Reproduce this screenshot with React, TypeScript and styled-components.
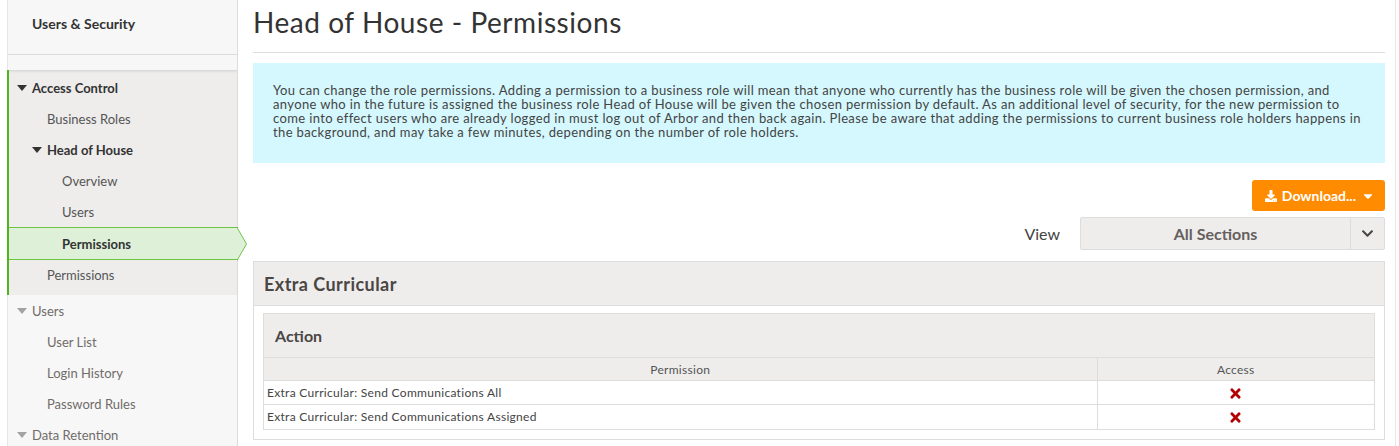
import React from 'react'
import styled, { createGlobalStyle } from 'styled-components'
import { FaDownload, FaCaretDown, FaChevronDown, FaTimes } from 'react-icons/fa'

const GlobalStyle = createGlobalStyle`
  html, body {
    margin: 0;
    padding: 0;
    background: #fff;
    font-family: Lato, "Open Sans", sans-serif;
    color: #444;
  }
  * { box-sizing: border-box; }
`

interface NavItem {
  label: string
  level: number
  bold?: boolean
  caret?: boolean
  selected?: boolean
}

const accessItems: NavItem[] = [
  { label: 'Access Control', level: 0, bold: true, caret: true },
  { label: 'Business Roles', level: 1 },
  { label: 'Head of House', level: 1, bold: true, caret: true },
  { label: 'Overview', level: 2 },
  { label: 'Users', level: 2 },
  { label: 'Permissions', level: 2, bold: true, selected: true },
  { label: 'Permissions', level: 1 },
]

const otherItems: NavItem[] = [
  { label: 'Users', level: 0, caret: true },
  { label: 'User List', level: 1 },
  { label: 'Login History', level: 1 },
  { label: 'Password Rules', level: 1 },
  { label: 'Data Retention', level: 0, caret: true },
]

const rows = ['Extra Curricular: Send Communications All', 'Extra Curricular: Send Communications Assigned']

function Caret({ muted }: { muted?: boolean }) {
  return (
    <CaretIcon width="10" height="6" viewBox="0 0 10 6">
      <path d="M0 0 H10 L5 6 Z" fill={muted ? '#a5a3a1' : '#333'} />
    </CaretIcon>
  )
}

function Nav({ items, muted }: { items: NavItem[]; muted?: boolean }) {
  return (
    <>
      {items.map((item, i) => (
        <NavRow
          key={i}
          indent={(muted ? 24 : 23) + item.level * 15 - (item.caret ? 15 : 0)}
          bold={item.bold}
          selected={item.selected}
          muted={muted}
        >
          {item.caret && <Caret muted={muted} />}
          {item.label}
          {item.selected && (
            <Arrow width="11" height="34" viewBox="0 0 11 34">
              <polygon points="0,0.5 9.5,17 0,33.5" fill="#dff0d8" />
              <polyline points="0,0.5 9.5,17 0,33.5" fill="none" stroke="#6cc644" strokeWidth="1" />
            </Arrow>
          )}
        </NavRow>
      ))}
    </>
  )
}

export default function App() {
  return (
    <>
      <GlobalStyle />
      <Page>
        <Sidebar>
          <SideHeader>Users &amp; Security</SideHeader>
          <SideSpacer />
          <ActiveGroup>
            <Nav items={accessItems} />
          </ActiveGroup>
          <Nav items={otherItems} muted />
        </Sidebar>
        <Main>
          <Title>Head of House - Permissions</Title>
          <Info>
            You can change the role permissions. Adding a permission to a business role will mean that anyone who
            currently has the business role will be given the chosen permission, and anyone who in the future is
            assigned the business role Head of House will be given the chosen permission by default. As an additional
            level of security, for the new permission to come into effect users who are already logged in must log out
            of Arbor and then back again. Please be aware that adding the permissions to current business role holders
            happens in the background, and may take a few minutes, depending on the number of role holders.
          </Info>
          <Actions>
            <DownloadButton>
              <FaDownload size={12} />
              Download...
              <FaCaretDown size={14} />
            </DownloadButton>
          </Actions>
          <ViewRow>
            <ViewLabel>View</ViewLabel>
            <Select>
              <SelectValue>All Sections</SelectValue>
              <SelectToggle>
                <FaChevronDown size={13} />
              </SelectToggle>
            </Select>
          </ViewRow>
          <Section>
            <SectionHeader>Extra Curricular</SectionHeader>
            <SectionBody>
              <SubPanel>
                <SubHeader>Action</SubHeader>
                <Table>
                  <colgroup>
                    <col style={{ width: 833 }} />
                    <col />
                  </colgroup>
                  <thead>
                    <tr>
                      <Th>Permission</Th>
                      <Th>Access</Th>
                    </tr>
                  </thead>
                  <tbody>
                    {rows.map(r => (
                      <tr key={r}>
                        <Td>{r}</Td>
                        <Td center>
                          <Denied>
                            <FaTimes size={15} />
                          </Denied>
                        </Td>
                      </tr>
                    ))}
                  </tbody>
                </Table>
              </SubPanel>
            </SectionBody>
          </Section>
        </Main>
      </Page>
    </>
  )
}

const Page = styled.div`
  display: flex;
  align-items: flex-start;
  height: 446px;
  overflow: hidden;
  padding-right: 3px;
`

const Sidebar = styled.nav`
  width: 231px;
  flex: none;
  margin-left: 7px;
  height: 446px;
  background: #f7f7f7;
  border-left: 1px solid #e6e6e6;
  border-right: 1px solid #dcdcdc;
  position: relative;
`

const SideHeader = styled.div`
  height: 55px;
  padding: 15px 0 0 24px;
  font-size: 14px;
  font-weight: 700;
  color: #333;
  border-bottom: 1px solid #dcdcdc;
`

const SideSpacer = styled.div`
  height: 15px;
`

const ActiveGroup = styled.div`
  background: #eeedec;
  border-left: 2px solid #4cb71c;
  margin-left: -1px;
  padding: 2px 0 5px;
  box-shadow: inset 0 3px 3px -2px rgba(0, 0, 0, 0.12);
`

const NavRow = styled.div<{ indent: number; bold?: boolean; selected?: boolean; muted?: boolean }>`
  position: relative;
  display: flex;
  align-items: center;
  height: ${({ selected }) => (selected ? 33 : 31)}px;
  margin: ${({ selected }) => (selected ? '0 -1px -1px 0' : '0')};
  padding-left: ${({ indent }) => indent}px;
  font-size: 13px;
  font-weight: ${({ bold }) => (bold ? 700 : 400)};
  color: ${({ bold, muted }) => (muted ? '#6f6c69' : bold ? '#333' : '#555')};
  background: ${({ selected }) => (selected ? '#dff0d8' : 'transparent')};
  border-top: ${({ selected }) => (selected ? '1px solid #6cc644' : 'none')};
  border-bottom: ${({ selected }) => (selected ? '1px solid #6cc644' : 'none')};
`

const CaretIcon = styled.svg`
  margin-right: 5px;
  flex: none;
`

const Arrow = styled.svg`
  position: absolute;
  right: -10px;
  top: -1px;
`

const Main = styled.main`
  flex: 1;
  min-width: 0;
  height: 446px;
  padding: 0 10px 0 15px;
  border-right: 1px solid #e8e8e8;
`

const Title = styled.h1`
  margin: 0;
  padding: 4px 0 12px;
  font-size: 28px;
  line-height: 36px;
  font-weight: 400;
  letter-spacing: 0.55px;
  color: #333;
  border-bottom: 1px solid #ddd;
`

const Info = styled.div`
  margin-top: 10px;
  height: 100px;
  padding: 20px 20px 0 20px;
  background: #d4f8fd;
  font-size: 13px;
  line-height: 14px;
  letter-spacing: 0.36px;
  color: #444;
`

const Actions = styled.div`
  display: flex;
  justify-content: flex-end;
  margin-top: 17px;
`

const DownloadButton = styled.button`
  display: flex;
  align-items: center;
  gap: 5px;
  height: 31px;
  padding: 0 10px 0 13px;
  border: none;
  border-radius: 3px;
  background: #ff8b00;
  color: #fff;
  font-family: inherit;
  font-size: 14px;
  font-weight: 700;
`

const ViewRow = styled.div`
  display: flex;
  justify-content: flex-end;
  align-items: center;
  margin-top: 6px;
  gap: 20px;
`

const ViewLabel = styled.span`
  font-size: 16px;
  color: #444;
`

const Select = styled.div`
  display: flex;
  width: 305px;
  height: 33px;
  background: #eeedec;
  border: 1px solid #ddd;
  border-radius: 2px;
`

const SelectValue = styled.div`
  flex: 1;
  display: flex;
  align-items: center;
  justify-content: center;
  font-size: 16px;
  font-weight: 700;
  color: #65605d;
`

const SelectToggle = styled.div`
  width: 34px;
  display: flex;
  align-items: center;
  justify-content: center;
  border-left: 1px solid #ddd;
  color: #4a4644;
`

const Section = styled.section`
  margin-top: 11px;
  border: 1px solid #ddd;
`

const SectionHeader = styled.div`
  height: 44px;
  display: flex;
  align-items: center;
  padding-left: 10px;
  background: #eeedec;
  border-bottom: 1px solid #ddd;
  font-size: 18px;
  font-weight: 700;
  letter-spacing: 0.45px;
  color: #4a4644;
`

const SectionBody = styled.div`
  padding: 7px 9px 9px;
`

const SubPanel = styled.div`
  border: 1px solid #ddd;
`

const SubHeader = styled.div`
  height: 43px;
  display: flex;
  align-items: center;
  padding-left: 11px;
  background: #eeedec;
  font-size: 16px;
  font-weight: 700;
  color: #4a4644;
`

const Table = styled.table`
  width: 100%;
  border-collapse: collapse;
  table-layout: fixed;
  font-size: 12px;
  letter-spacing: 0.3px;
`

const Th = styled.th`
  height: 23px;
  background: #eeedec;
  border-top: 1px solid #ddd;
  border-left: 1px solid #ddd;
  font-weight: 400;
  color: #555;
  text-align: center;
  padding: 0;
  &:first-child { border-left: none; }
`

const Td = styled.td<{ center?: boolean }>`
  height: 24px;
  border-top: 1px solid #ddd;
  border-left: 1px solid #ddd;
  padding: 0 3px;
  color: #444;
  text-align: ${({ center }) => (center ? 'center' : 'left')};
  vertical-align: middle;
  &:first-child { border-left: none; }
`

const Denied = styled.span`
  display: inline-flex;
  color: #b30000;
  vertical-align: middle;
`
